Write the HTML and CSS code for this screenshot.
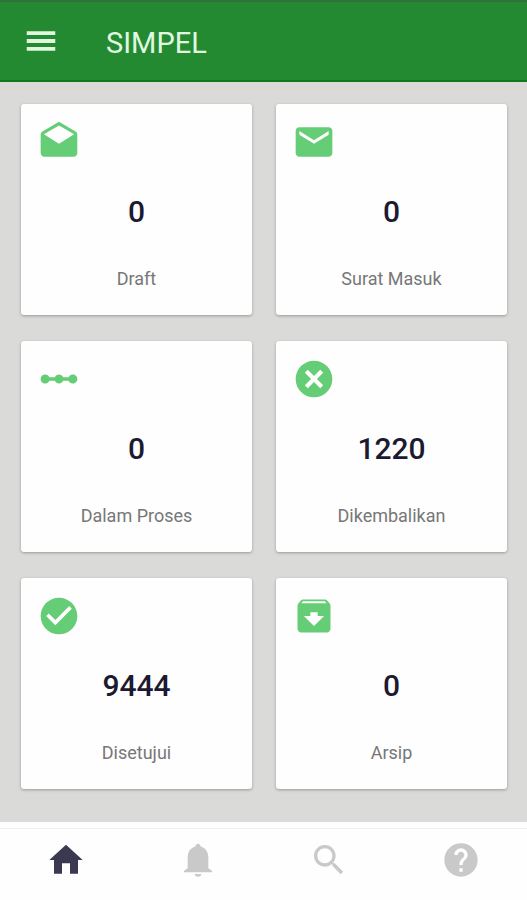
FILE: index.html
```html
<!DOCTYPE html>
<html lang="id">
<head>
    <meta charset="UTF-8">
    <meta name="viewport" content="width=device-width, initial-scale=1.0">
    <title>SIMPEL</title>

    <link rel="stylesheet" href="styles.css">
</head>
<body>

    <header class="topbar">
        <button class="menu_button" type="button" aria-label="Menu">
            <svg class="menu_icon" viewBox="0 0 24 24"><path d="M3 18.2h18v-2.4H3zM3 13.2h18v-2.4H3zM3 8.2h18V5.8H3z"/></svg>
        </button>
        <h1 class="title">SIMPEL</h1>
    </header>

    <main class="cards">
        <a class="card" href="#draft">
            <svg class="card_icon" viewBox="0 0 24 24"><path d="M21.99 8c0-.72-.37-1.35-.94-1.7L12 1 2.95 6.3C2.38 6.65 2 7.28 2 8v10c0 1.1.9 2 2 2h16c1.1 0 2-.9 2-2l-.01-10zM12 13L3.74 7.84 12 3l8.26 4.84L12 13z"/></svg>
            <span class="card_count">0</span>
            <span class="card_label">Draft</span>
        </a>

        <a class="card" href="#masuk">
            <svg class="card_icon" viewBox="0 0 24 24"><path d="M20 4H4c-1.1 0-1.99.9-1.99 2L2 18c0 1.1.9 2 2 2h16c1.1 0 2-.9 2-2V6c0-1.1-.9-2-2-2zm0 4l-8 5-8-5V6l8 5 8-5v2z"/></svg>
            <span class="card_count">0</span>
            <span class="card_label">Surat Masuk</span>
        </a>

        <a class="card" href="#proses">
            <svg class="card_icon" viewBox="0 0 24 24"><path d="M19.5 9.5c-1.03 0-1.9.62-2.29 1.5h-2.92c-.39-.88-1.26-1.5-2.29-1.5s-1.9.62-2.29 1.5H6.79c-.39-.88-1.26-1.5-2.29-1.5C3.12 9.5 2 10.62 2 12s1.12 2.5 2.5 2.5c1.03 0 1.9-.62 2.29-1.5h2.92c.39.88 1.26 1.5 2.29 1.5s1.9-.62 2.29-1.5h2.92c.39.88 1.26 1.5 2.29 1.5 1.38 0 2.5-1.12 2.5-2.5s-1.12-2.5-2.5-2.5z"/></svg>
            <span class="card_count">0</span>
            <span class="card_label">Dalam Proses</span>
        </a>

        <a class="card" href="#dikembalikan">
            <svg class="card_icon" viewBox="0 0 24 24"><path d="M12 2C6.47 2 2 6.47 2 12s4.47 10 10 10 10-4.47 10-10S17.53 2 12 2zm5 13.4L15.4 17 12 13.6 8.6 17 7 15.4 10.4 12 7 8.6 8.6 7 12 10.4 15.4 7 17 8.6 13.6 12 17 15.4z"/></svg>
            <span class="card_count">1220</span>
            <span class="card_label">Dikembalikan</span>
        </a>

        <a class="card" href="#disetujui">
            <svg class="card_icon" viewBox="0 0 24 24"><path d="M12 2C6.48 2 2 6.48 2 12s4.48 10 10 10 10-4.48 10-10S17.52 2 12 2zm-2 15l-5-5 1.41-1.41L10 14.17l7.59-7.59L19 8l-9 9z"/></svg>
            <span class="card_count">9444</span>
            <span class="card_label">Disetujui</span>
        </a>

        <a class="card" href="#arsip">
            <svg class="card_icon" viewBox="0 0 24 24"><path fill-rule="evenodd" d="M20.54 5.23l-1.39-1.68C18.88 3.21 18.47 3 18 3H6c-.47 0-.88.21-1.16.55L3.46 5.23C3.17 5.57 3 6.02 3 6.5V19c0 1.1.9 2 2 2h14c1.1 0 2-.9 2-2V6.5c0-.48-.17-.93-.46-1.27zM12 17.5L6.5 12H10v-2h4v2h3.5L12 17.5zM5.12 5l.81-1h12l.94 1H5.12z"/></svg>
            <span class="card_count">0</span>
            <span class="card_label">Arsip</span>
        </a>
    </main>

    <nav class="tabs">
        <a class="tab tab_active" href="#home" aria-label="Home">
            <svg class="tab_icon" viewBox="0 0 24 24"><path d="M9.6 20.2V14h4.8v6.2h4.8V12H22L12 2.9 2 12h2.8v8.2z"/></svg>
        </a>
        <a class="tab" href="#notifikasi" aria-label="Notifikasi">
            <svg class="tab_icon" viewBox="0 0 24 24"><path d="M12 22c1.1 0 2-.7 2-1.6h-4c0 .9.9 1.6 2 1.6zm6.2-5v-6.5c0-3.3-1.8-5.9-4.7-6.6V3.7c0-.8-.7-1.4-1.5-1.4s-1.5.6-1.5 1.4v.2c-2.9.7-4.7 3.3-4.7 6.6V17l-2.2 1.5v.8h16.8v-.8z"/></svg>
        </a>
        <a class="tab" href="#cari" aria-label="Cari">
            <svg class="tab_icon" viewBox="0 0 24 24"><path d="M15.5 14h-.79l-.28-.27C15.41 12.59 16 11.11 16 9.5 16 5.91 13.09 3 9.5 3S3 5.91 3 9.5 5.91 16 9.5 16c1.61 0 3.09-.59 4.23-1.57l.27.28v.79l5 4.99L20.49 19l-4.99-5zm-6 0C7.01 14 5 11.99 5 9.5S7.01 5 9.5 5 14 7.01 14 9.5 11.99 14 9.5 14z"/></svg>
        </a>
        <a class="tab" href="#bantuan" aria-label="Bantuan">
            <svg class="tab_icon" viewBox="0 0 24 24"><path d="M12 2C6.48 2 2 6.48 2 12s4.48 10 10 10 10-4.48 10-10S17.52 2 12 2zm1 17h-2v-2h2v2zm2.07-7.75l-.9.92C13.45 12.9 13 13.5 13 15h-2v-.5c0-1.1.45-2.1 1.17-2.83l1.24-1.26c.37-.36.59-.86.59-1.41 0-1.1-.9-2-2-2s-2 .9-2 2H8c0-2.21 1.79-4 4-4s4 1.79 4 4c0 .88-.36 1.68-.93 2.25z"/></svg>
        </a>
    </nav>

</body>
</html>
```

FILE: styles.css
```css
*,*::after,*::before{
    box-sizing: border-box;
    margin: 0;
    padding: 0;
}

body{
    display: flex;
    flex-direction: column;
    min-height: 100vh;
    font-family: Roboto, "Liberation Sans", sans-serif;
    background-color: #dadad8;
}

a{
    color: inherit;
    text-decoration: none;
}

.topbar{
    display: flex;
    align-items: center;
    gap: 46px;
    height: 82px;
    padding: 0 22px;
    background-color: #248a32;
    border-top: 2px solid #35703a;
    border-bottom: 2px solid #117a20;
}

.menu_button{
    display: flex;
    border: none;
    background: none;
}

.menu_icon{
    width: 38px;
    height: 38px;
    fill: #e0f8e0;
}

.title{
    padding-top: 4px;
    font-size: 29px;
    font-weight: 400;
    line-height: 36px;
    color: #e0f8e0;
}

.cards{
    flex: 1;
    display: grid;
    grid-template-columns: 1fr 1fr;
    align-content: start;
    gap: 26px 24px;
    padding: 22px 20px 32px 21px;
}

.card{
    display: flex;
    flex-direction: column;
    padding: 16px 16px 24px;
    background-color: #fefefe;
    border-radius: 3px;
    box-shadow: 0 1px 3px rgba(0, 0, 0, 0.3);
}

.card_icon{
    width: 44px;
    height: 44px;
    fill: #65cd76;
}

.card_count{
    margin-top: 30px;
    font-size: 30px;
    font-weight: 500;
    line-height: 36px;
    text-align: center;
    color: #1c1a30;
}

.card_label{
    margin-top: 37px;
    font-size: 18px;
    line-height: 24px;
    text-align: center;
    color: #777;
}

.tabs{
    display: flex;
    background-color: #fefefe;
    border-top: 6px solid #fefefe;
}

.tab{
    flex: 1;
    display: flex;
    justify-content: center;
    padding: 11px 0 20px;
    border-top: 1px solid #f0f0f0;
    color: #c9c9c9;
}

.tab_active{
    color: #3b3950;
}

.tab_icon{
    width: 40px;
    height: 40px;
    fill: currentColor;
}
```
